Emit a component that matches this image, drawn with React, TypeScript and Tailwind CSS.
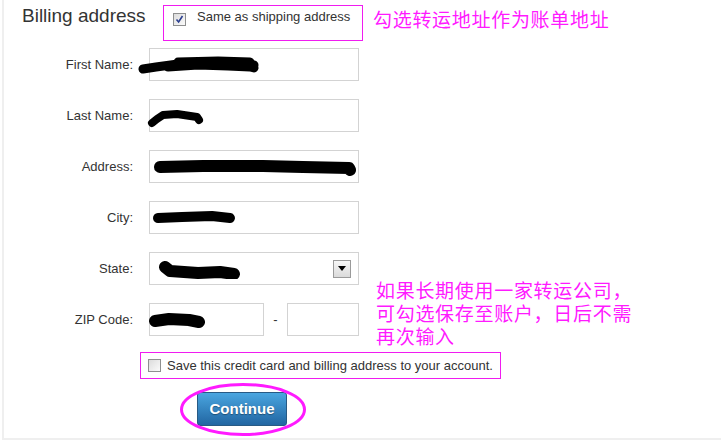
import type { ReactNode } from 'react'

const sans = "font-['Liberation_Sans',Arial,sans-serif]"
const cjk = "font-['Noto_Sans_CJK_SC','Noto_Sans',sans-serif]"

// Black marker scribble used to hide the personal data
function Scribble({ w, h, d, sw, className = '' }: { w: number; h: number; d: string[]; sw: number; className?: string }) {
  return (
    <svg width={w} height={h} viewBox={`0 0 ${w} ${h}`} className={`shrink-0 ${className}`}>
      {d.map((p, i) => (
        <path key={i} d={p} fill="none" stroke="#000" strokeWidth={sw} strokeLinecap="round" strokeLinejoin="round" />
      ))}
    </svg>
  )
}

function Checkbox({ checked }: { checked?: boolean }) {
  return (
    <span className="flex h-[13px] w-[13px] shrink-0 items-center justify-center border border-[#8e8f8f] bg-gradient-to-br from-[#dcdcdc] to-[#fbfbfb]">
      {checked && (
        <svg width="9" height="9" viewBox="0 0 9 9">
          <path d="M1.5 4.5 L3.6 7 L7.5 1" fill="none" stroke="#2b3f8f" strokeWidth="1.6" />
        </svg>
      )}
    </span>
  )
}

function Row({ label, children }: { label: string; children: ReactNode }) {
  return (
    <div className="flex h-[33px] items-center">
      <div className="w-[129px] pt-[1px] text-right text-[13px] text-[#333]">{label}</div>
      <div className="ml-[16px] flex items-center">{children}</div>
    </div>
  )
}

function Field({ width = 210, children }: { width?: number; children?: ReactNode }) {
  return (
    <div
      className="flex h-[33px] items-center border border-[#d3d3d3] bg-white"
      style={{ width }}
    >
      {children}
    </div>
  )
}

export default function App() {
  return (
    <div className={`h-[440px] w-[721px] overflow-hidden bg-white pl-[2px] ${sans}`}>
      <div className="h-full border-b-2 border-l-2 border-[#efefef] bg-white">
        {/* En-tête */}
        <div className="flex items-start">
          <h2 className="mt-[5px] w-[159px] pl-[18px] text-[19px] leading-[22px] text-[#333]">Billing address</h2>
          <label className="mt-[5px] flex h-[36px] w-[200px] items-start border border-[#f01cf0] pl-[9px] pt-[7px]">
            <Checkbox checked />
            <span className="ml-[11px] mt-[-4px] text-[13px] leading-[15px] text-[#333]">Same as shipping address</span>
          </label>
          <p className={`ml-[10px] mt-[8px] text-[19px] leading-[21px] tracking-[0.7px] text-[#ff1aff] ${cjk}`}>
            勾选转运地址作为账单地址
          </p>
        </div>

        {/* Formulaire */}
        <div className="mt-[7px] flex h-[288px]">
          <div className="flex w-[355px] flex-col gap-[18px]">
            <Row label="First Name:">
              <Field>
                <Scribble
                  w={124}
                  h={24}
                  sw={9}
                  className="ml-[-12px]"
                  d={['M5 16 L18 14 L40 11 L70 9 L100 10 L116 12', 'M30 14 L60 12 L90 13 L112 14 L116 15', 'M40 9 L80 8 L112 9']}
                />
              </Field>
            </Row>
            <Row label="Last Name:">
              <Field>
                <Scribble w={58} h={22} sw={8} className="ml-[-3px] mt-[4px]" d={['M5 16 L10 12 L16 8 L30 7 L50 10 L52 13']} />
              </Field>
            </Row>
            <Row label="Address:">
              <Field>
                <Scribble w={204} h={20} sw={12} className="ml-[3px]" d={['M7 10 L50 9 L110 9 L150 10 L196 11 L197 13']} />
              </Field>
            </Row>
            <Row label="City:">
              <Field>
                <Scribble w={84} h={16} sw={10} className="ml-[2px]" d={['M6 8 L30 7 L60 6 L78 8']} />
              </Field>
            </Row>
            <Row label="State:">
              <Field>
                <Scribble w={84} h={20} sw={12} className="ml-[8px]" d={['M7 8 L12 12 L40 14 L62 13 L76 15']} />
                <span className="ml-auto mr-[7px] flex h-[18px] w-[18px] items-center justify-center border border-[#9a9a9a] bg-gradient-to-b from-[#f7f7f7] to-[#dadada]">
                  <svg width="8" height="5" viewBox="0 0 8 5">
                    <path d="M0 0 L8 0 L4 5 Z" fill="#000" />
                  </svg>
                </span>
              </Field>
            </Row>
            <Row label="ZIP Code:">
              <Field width={115}>
                <Scribble w={56} h={18} sw={12} className="ml-[-1px]" d={['M6 10 L20 8 L40 9 L50 11']} />
              </Field>
              <span className="w-[23px] text-center text-[13px] text-[#333]">-</span>
              <Field width={72} />
            </Row>
          </div>
          <p className={`ml-[17px] mt-[230px] text-[19px] leading-[23px] tracking-[0.7px] text-[#ff1aff] ${cjk}`}>
            如果长期使用一家转运公司，
            <br />
            可勾选保存至账户，日后不需
            <br />
            再次输入
          </p>
        </div>

        {/* Enregistrer la carte */}
        <label className="ml-[136px] mt-[16px] flex h-[27px] w-[361px] items-center border border-[#f01cf0] pl-[7px]">
          <Checkbox />
          <span className="ml-[6px] text-[13px] text-[#333]">Save this credit card and billing address to your account.</span>
        </label>

        {/* Bouton */}
        <div className="relative ml-[193px] mt-[13px] w-[90px]">
          <button className="flex h-[34px] w-[90px] items-center justify-center rounded-[3px] border border-[#285a84] bg-gradient-to-b from-[#4aa6e0] to-[#2266a2] text-[15px] font-bold text-white [text-shadow:0_1px_1px_rgba(0,0,0,0.35)]">
            Continue
          </button>
          <svg width="128" height="55" viewBox="0 0 128 55" className="pointer-events-none absolute left-[-18px] top-[-10px]">
            <ellipse cx="64" cy="27.5" rx="61.5" ry="25" fill="none" stroke="#ff1aff" strokeWidth="3" />
          </svg>
        </div>
      </div>
    </div>
  )
}
